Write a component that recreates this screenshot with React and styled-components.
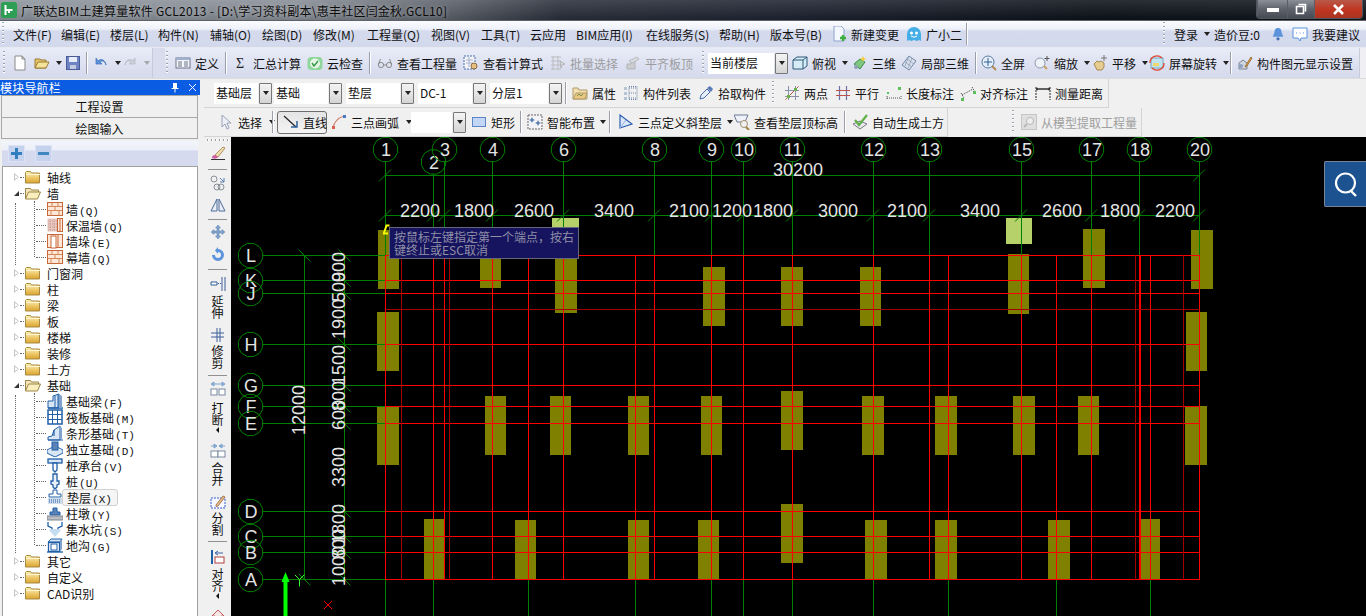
import styled, { createGlobalStyle } from "styled-components";

const GlobalStyle = createGlobalStyle`
  html, body { margin: 0; padding: 0; background: #f0f0f0; overflow: hidden; }
  body { font-family: "Noto Sans CJK SC", "Liberation Sans", sans-serif; font-size: 12px; color: #111; }
`;

const Window = styled.div`
  width: 1366px;
  height: 616px;
  display: flex;
  flex-direction: column;
  overflow: hidden;
  background: #f0f0f0;
`;

/* ---------- title bar ---------- */
const TitleBar = styled.div`
  height: 21px;
  flex: none;
  display: flex;
  align-items: center;
  padding-left: 1px;
  border-bottom: 1px solid #5c6068;
  box-sizing: border-box;
  background:
    linear-gradient(180deg, rgba(255,255,255,.12), rgba(0,0,0,.12)),
    linear-gradient(90deg, #8e959e 0, #878d96 300px, #5b6069 450px, #2a2f3b 560px, #1d2230 800px, #0b1219 1100px, #11161c 1366px);
`;
const TitleText = styled.div`
  margin-left: 4px;
  font-size: 12px;
  letter-spacing: 0.24px;
  white-space: nowrap;
  color: #0c0c0c;
  text-shadow: 0 0 4px rgba(255,255,255,.55);
`;
const WinButtons = styled.div`
  margin-left: auto;
  margin-right: 3px;
  align-self: flex-start;
  display: flex;
  height: 18px;
  border: 1px solid #50545c;
  border-top: none;
  border-radius: 0 0 4px 4px;
  overflow: hidden;
`;
const WinBtn = styled.div`
  width: ${(p) => p.$w}px;
  display: flex;
  align-items: center;
  justify-content: center;
  border-left: 1px solid #5a5e66;
  background: ${(p) => p.$close
    ? "linear-gradient(180deg,#b85a4a,#c03520 55%,#a83422)"
    : "linear-gradient(180deg,#8a8f98,#5d626c 50%,#474b54)"};
`;

/* ---------- menu bar ---------- */
const MenuBar = styled.div`
  height: 27px;
  flex: none;
  display: flex;
  align-items: center;
  background: linear-gradient(180deg, #fbfcff 0, #eef1f9 30%, #d5daed 40%, #d3d9ec 100%);
  border-bottom: 1px solid #e8eaf0;
  box-sizing: border-box;
`;
const MenuItem = styled.div`
  width: ${(p) => p.$w}px;
  flex: none;
  display: flex;
  align-items: center;
  white-space: nowrap;
  gap: 4px;
`;
const Grip = styled.div`
  flex: none;
  width: 2px;
  height: ${(p) => p.$h || 24}px;
  margin: 0 ${(p) => p.$r ?? 3}px 0 ${(p) => p.$l ?? 3}px;
  background: repeating-linear-gradient(180deg, #9aa0b0 0 1px, #fff 1px 2px, transparent 2px 4px);
`;
const HGrip = styled.div`
  width: 22px;
  height: 2px;
  margin-top: 2px;
  flex: none;
  background: repeating-linear-gradient(90deg, #a0a0a0 0 1px, #fff 1px 2px, transparent 2px 4px);
`;

/* ---------- tool bars ---------- */
const MainBar = styled.div`
  height: 31px;
  flex: none;
  display: flex;
  align-items: center;
  background: linear-gradient(180deg, #e9ecf7 0, #dfe3f2 45%, #d4d9ec 100%);
  border-bottom: 1px solid #dcdcdc;
  box-sizing: border-box;
`;
const BarStrip = styled.div`
  width: ${(p) => p.$w}px;
  height: 100%;
  flex: none;
  background: ${(p) => p.$bg || "#e6e8f2"};
  border-left: 1px solid #c8ccd8;
  box-sizing: border-box;
`;
const Tool = styled.div`
  width: ${(p) => p.$w}px;
  flex: none;
  display: flex;
  align-items: center;
  gap: 4px;
  white-space: nowrap;
  color: ${(p) => (p.$off ? "#8c8c8c" : "#111")};
  opacity: ${(p) => (p.$off ? 0.8 : 1)};
`;
const ToolSep = styled.div`
  width: ${(p) => p.$w}px;
  height: 22px;
  flex: none;
  border-left: 1px solid #9a9ea8;
  box-shadow: inset 1px 0 0 #fff;
  box-sizing: border-box;
`;
const Caret = styled.span`
  flex: none;
  width: 0;
  height: 0;
  margin-left: ${(p) => p.$ml ?? 0}px;
  border-left: 3.5px solid transparent;
  border-right: 3.5px solid transparent;
  border-top: 4px solid ${(p) => p.$c || "#222"};
`;
const SelectBox = styled.div`
  width: ${(p) => p.$w}px;
  flex: none;
  display: flex;
  height: 21px;
`;
const SelectValue = styled.div`
  flex: 1;
  background: #fff;
  padding-left: 2px;
  line-height: 20px;
  white-space: nowrap;
  font-size: 12px;
`;
const SelectArrow = styled.div`
  width: 11px;
  margin-left: 1px;
  display: flex;
  align-items: center;
  justify-content: center;
  border: 1px solid #777;
  border-radius: 1px;
  background: linear-gradient(180deg, #f4f4f4, #d4d4d4);
`;
const RightArea = styled.div`
  flex: 1;
  min-width: 0;
  display: flex;
  flex-direction: column;
`;
const SubRow = styled.div`
  height: 29px;
  flex: none;
  display: flex;
  align-items: stretch;
`;
const SubBar = styled.div`
  display: flex;
  align-items: center;
  flex: none;
  margin-left: ${(p) => p.$ml || 0}px;
  padding-left: ${(p) => p.$pl || 0}px;
  background: #f0f0f0;
  border-right: 1px solid #d4d4d4;
  border-bottom: 1px solid #d4d4d4;
  box-sizing: border-box;
`;
const PressedTool = styled(Tool)`
  height: 23px;
  box-sizing: border-box;
  padding-left: 5px;
  margin-right: 4px;
  border: 1px solid #6e6e6e;
  border-radius: 3px;
  background: linear-gradient(180deg, #e4e4e4, #f4f4f4);
`;

/* ---------- left panel ---------- */
const Body = styled.div`
  flex: 1;
  min-height: 0;
  display: flex;
`;
const LeftPanel = styled.div`
  width: 200px;
  flex: none;
  margin-right: 4px;
  padding-top: 1px;
  box-sizing: border-box;
  display: flex;
  flex-direction: column;
`;
const PanelHead = styled.div`
  height: 15px;
  flex: none;
  display: flex;
  align-items: center;
  background: #0a5ce2;
  color: #fff;
  font-size: 12px;
  letter-spacing: 0.2px;
`;
const PanelHeadBtns = styled.div`
  margin-left: auto;
  display: flex;
  align-items: center;
  gap: 8px;
  padding-right: 3px;
`;
const NavButton = styled.div`
  height: 22px;
  flex: none;
  margin: 0 2px 0 1px;
  display: flex;
  align-items: center;
  justify-content: center;
  background: #f0f0f0;
  border: 1px solid #a8a8a8;
  border-bottom-width: ${(p) => (p.$last ? 1 : 0)}px;
  font-size: 12px;
  box-sizing: border-box;
  &:first-of-type { margin-top: 1px; }
`;
const TreeTools = styled.div`
  height: 25px;
  flex: none;
  margin: 2px 2px 0 2px;
  display: flex;
  align-items: center;
  gap: 10px;
  padding-left: 6px;
  background: linear-gradient(180deg, #f2f4fb 0, #eef0f9 35%, #d5daee 40%, #d5daee 100%);
`;
const ExpandBtn = styled.div`
  width: 15px;
  height: 15px;
  display: flex;
  align-items: center;
  justify-content: center;
  background: #c5d2ee;
  border: 1px solid #dbe3f4;
`;
const Tree = styled.div`
  flex: 1;
  margin: 0 2px;
  padding-top: 2px;
  background: #fff;
  border-left: 1px solid #a0a0a0;
  border-right: 1px solid #a0a0a0;
  border-top: 1px solid #a0a0a0;
  overflow: hidden;
`;
const TreeBranch = styled.div`
  position: relative;
  &::before {
    content: "";
    position: absolute;
    left: 12px;
    top: 2px;
    bottom: 0;
    border-left: 1px dotted #666;
  }
  &::after {
    content: "";
    position: absolute;
    left: 31px;
    top: 0;
    bottom: 8px;
    border-left: 1px dotted #666;
  }
`;
const TreeRow = styled.div`
  height: 16px;
  display: flex;
  align-items: center;
  position: relative;
  z-index: 1;
  padding-left: ${(p) => (p.$child ? 32 : 11)}px;
  white-space: nowrap;
`;
const Expander = styled.span`
  width: 0;
  height: 0;
  flex: none;
  border-top: 4.5px solid transparent;
  border-bottom: 4.5px solid transparent;
  border-left: 5px solid #c4c4c4;
  position: relative;
  &::after {
    content: "";
    position: absolute;
    left: -4px;
    top: -2.5px;
    border-top: 2.5px solid transparent;
    border-bottom: 2.5px solid transparent;
    border-left: 3px solid #fff;
  }
`;
const ExpanderOpen = styled.span`
  width: 0;
  height: 0;
  flex: none;
  border-bottom: 5px solid #333;
  border-left: 5px solid transparent;
`;
const Dots = styled.span`
  flex: none;
  width: ${(p) => p.$w}px;
  margin: 0 1px;
  border-top: 1px dotted #666;
`;
const TreeLabel = styled.span`
  margin-left: ${(p) => p.$ml ?? 6}px;
  font-size: 12px;
  letter-spacing: 0;
  ${(p) => p.$sel && `
    margin-left: -1px;
    padding: 0 5px 0 4px;
    height: 15px;
    line-height: 15px;
    border: 1px solid #cfcfcf;
    border-radius: 3px;
    background: #f5f5f5;
  `}
`;
const KeyHint = styled.span`
  font-family: "Liberation Mono", monospace;
  font-size: 11px;
  margin-left: 1px;
`;

/* ---------- vertical tool column ---------- */
const WorkArea = styled.div`
  flex: 1;
  min-height: 0;
  display: flex;
`;
const VBar = styled.div`
  width: 27px;
  flex: none;
  display: flex;
  flex-direction: column;
  align-items: center;
  overflow: hidden;
  background: #f0f0f0;
`;
const VItem = styled.div`
  flex: none;
  display: flex;
  flex-direction: column;
  align-items: center;
  margin-top: ${(p) => p.$mt || 0}px;
`;
const VSep = styled.div`
  flex: none;
  width: 19px;
  height: 1px;
  background: #909090;
  margin-top: ${(p) => p.$mt}px;
`;
const VLabel = styled.div`
  width: 12px;
  margin-top: ${(p) => p.$mt || 2}px;
  font-size: 12px;
  line-height: 12px;
  color: #111;
  word-break: break-all;
`;
const VCaret = styled.span`
  margin-top: 1px;
  width: 0;
  height: 0;
  border-top: 3px solid transparent;
  border-bottom: 3px solid transparent;
  border-right: 3px solid #111;
`;

/* ---------- drawing surface ---------- */
const CanvasWrap = styled.div`
  flex: 1;
  position: relative;
  background: #000;
  overflow: hidden;
`;
const Hint = styled.div`
  position: absolute;
  left: ${389 - 231}px;
  top: ${227 - 137}px;
  width: 190px;
  height: 32px;
  box-sizing: border-box;
  padding: 2px 0 0 4px;
  background: #16145e;
  border: 1px solid #66667c;
  color: #8f8fa6;
  font-size: 12px;
  line-height: 13px;
`;
const SearchBtn = styled.div`
  position: absolute;
  right: 0;
  top: ${161 - 137}px;
  width: 42px;
  height: 46px;
  box-sizing: border-box;
  display: flex;
  align-items: center;
  justify-content: center;
  background: #1c528f;
  border: 1px solid #7a8494;
  border-right: none;
  border-radius: 2px 0 0 2px;
`;

/* ---------- icons ---------- */
const folderFill = (
  <linearGradient id="fold" x1="0" y1="0" x2="0" y2="1">
    <stop offset="0" stopColor="#fff3b8" />
    <stop offset="1" stopColor="#dca32c" />
  </linearGradient>
);
const B = "#1f5fa8";

const icons = {
  file: <path d="M3 1h7l3 3v11H3z M10 1v3h3" fill="#fff" stroke="#8a8a8a" />,
  open: <><path d="M1 13V4h5l1 1h5v8z" fill="#e8c468" stroke="#9a7a30" /><path d="M1 13l3-6h11l-3 6z" fill="#f6e39a" stroke="#9a7a30" /></>,
  save: <><rect x="1.5" y="1.5" width="13" height="13" fill="#6d83c4" stroke="#4a5c98" /><rect x="4" y="2" width="8" height="5" fill="#e8ecf8" /><rect x="5" y="10" width="6" height="4" fill="#c3cbe4" /></>,
  undo: <path d="M3 3v6h6L7 7c2-2 5-1 6 3-.5-5-5-7-8-4z" fill="#5b93dd" stroke="#3d70b8" strokeWidth=".7" />,
  redo: <path d="M13 3v6H7l2-2c-2-2-5-1-6 3 .5-5 5-7 8-4z" fill="#c8ccd4" stroke="#a8acb6" strokeWidth=".7" />,
  define: <><rect x="1" y="3" width="14" height="10" fill="#f4f6fb" stroke="#6a7488" /><rect x="1" y="3" width="14" height="2" fill="#9db0d0" /><path d="M3 7h4M3 9h4M3 11h4M9 7h4M9 9h4M9 11h4" stroke="#6a7488" /></>,
  sigma: <text x="3" y="13" fontSize="14" fontFamily="Liberation Serif" fill="#222">Σ</text>,
  cloud: <><rect x="0.5" y="2" width="15" height="13" rx="4" fill="#8fd69a" /><circle cx="8" cy="8.5" r="5" fill="#e6f6e6" /><path d="M5 8l2 3 4-5" fill="none" stroke="#3a9a4a" strokeWidth="1.5" /></>,
  glasses: <><circle cx="4" cy="10" r="2.6" fill="none" stroke="#8a8a8a" /><circle cx="12" cy="10" r="2.6" fill="none" stroke="#8a8a8a" /><path d="M6.5 10h3M1.5 9l2-5M14.5 9l-2-5" stroke="#8a8a8a" /></>,
  calc: <><rect x="1" y="1" width="11" height="13" fill="#f2f4fa" stroke="#4a6aa8" strokeDasharray="2 1" /><path d="M3 5h7M3 8h7M6 2v10" stroke="#a8b2c8" /><circle cx="11" cy="11" r="3" fill="#e8c080" stroke="#8a6a40" /></>,
  batch: <><path d="M1 2h10M1 6h10M1 10h10M1 14h10M3 1v14M8 1v14" stroke="#b4b4b4" /><path d="M10 6l5 3-3 1-1 3z" fill="#d8d8d8" stroke="#aaa" /></>,
  level: <><path d="M2 14V9h4V6h4v8z" fill="#c8c8c8" stroke="#aaa" /><path d="M4 6l8-4 2 2-7 4z" fill="#dcdcdc" stroke="#b0b0b0" /></>,
  cube: <><path d="M1 5l4-3h10v9l-4 3H1z" fill="#d6ecf6" stroke="#2f5a78" /><path d="M1 5h10v9M11 5l4-3" fill="none" stroke="#2f5a78" /></>,
  three: <><path d="M2 9l6-5 5 3-5 7z" fill="#7fc67f" stroke="#3a8a4a" /><path d="M11 1l1 2 2 1-2 1-1 2-1-2-2-1 2-1z" fill="#f0d040" /><circle cx="4" cy="12" r="2" fill="#8fa0b8" /></>,
  part3d: <><path d="M8 1l7 5-7 9-7-5z" fill="#d8e0ec" stroke="#7088a8" /><path d="M4 7l7 5M6 4l7 5M8 1L4 11M11 3L7 13" stroke="#8a9ab4" strokeWidth=".7" /></>,
  full: <><circle cx="7" cy="7" r="6" fill="#e4eef8" stroke="#5a7aa0" /><path d="M7 3v8M3 7h8" stroke="#2f5f98" /><path d="M11 11l4 4" stroke="#b08a50" strokeWidth="2" /></>,
  zoom: <><circle cx="6" cy="8" r="5" fill="#eef3fa" stroke="#8a9ab0" /><path d="M10 11l3 3" stroke="#c8a060" strokeWidth="2" /><path d="M13 1v5M10.5 3.500h5" stroke="#555" /></>,
  pan: <><path d="M2 9l3-3 2 1 2-1 3 2v4l-2 3H5z" fill="#e6cc90" stroke="#a88a50" /><path d="M12 0v6M9 3h6" stroke="#777" /></>,
  rotate: <><rect x="2" y="3" width="12" height="10" fill="#bfe4f0" stroke="#7aa8c0" /><rect x="4" y="8" width="6" height="3" fill="#f0d870" /><path d="M1 8a7 7 0 0 1 12-5M15 8a7 7 0 0 1-12 5" fill="none" stroke="#e04830" strokeWidth="1.3" /></>,
  setting: <><path d="M2 14V8l4-3 4 3v6z" fill="#cfd6e2" stroke="#7a8494" /><path d="M9 10l5-8 1 1-5 8-2 1z" fill="#e8b060" stroke="#a07030" /><circle cx="4" cy="11" r="2" fill="#8aa0c0" /></>,
  prop: <><path d="M1 3h5l1 2h8v9H1z" fill="#f2e0b0" stroke="#b09a68" /><path d="M1 14l3-6h11l-2 6z" fill="#e8c880" stroke="#b09a68" /><path d="M5 11l2-2 2 2 2-2" stroke="#7a8a50" fill="none" /></>,
  list: <><rect x="1" y="2" width="3" height="3" fill="#b6c4d8" /><rect x="1" y="7" width="3" height="3" fill="#b6c4d8" /><rect x="1" y="12" width="3" height="3" fill="#b6c4d8" /><path d="M6 3h8M6 8h8M6 13h8M6 1.500h8v13H6z" fill="none" stroke="#6d84a6" strokeDasharray="1 1" /></>,
  picker: <><path d="M2 14l1-4 6-6 3 3-6 6z" fill="#e6eef8" stroke="#4a6aa8" /><path d="M9 3l3-2 3 3-2 3z" fill="#5a7ab8" /></>,
  twoPt: <><path d="M4.500 1v14M11.500 1v14M1 5.500h14M1 11.500h14" stroke="#8a90a8" /><path d="M1.500 14.500L14.500 1.500" stroke="#c0503a" /><rect x="3" y="10" width="3" height="3" fill="#6ab04a" /><rect x="10" y="3" width="3" height="3" fill="#6ab04a" /></>,
  parallel: <><path d="M4.500 1v14M11.500 1v14" stroke="#6a70a8" strokeWidth="1.200" /><path d="M1 5.500h14M1 10.500h14" stroke="#c0504a" strokeWidth="1.200" /></>,
  lenDim: <><path d="M1 13h14M1 11v4M15 11v4" stroke="#555" strokeDasharray="1 1" /><rect x="12" y="2" width="3" height="3" fill="#5ac05a" /><rect x="1" y="7" width="2" height="2" fill="#5ac05a" /></>,
  alignDim: <><path d="M2 10l11-6M1 8l3 5M12 2l3 5" stroke="#555" strokeDasharray="1.500 1" fill="none" /><rect x="1" y="13" width="3" height="3" fill="#5ac05a" /><rect x="13" y="6" width="3" height="3" fill="#5ac05a" /></>,
  measure: <><path d="M1 2v13M15 2v13" stroke="#222" strokeDasharray="2 1" /><path d="M1 4h14" stroke="#333" strokeWidth="1.500" /><path d="M3 3l-2 1 2 1M13 3l2 1-2 1" stroke="#333" fill="none" /></>,
  arrow: <path d="M4 1v12l3-3 2 5 2-1-2-5h4z" fill="#eceff8" stroke="#9aa2b8" />,
  line: <><path d="M1 2l12 11" stroke="#222" strokeWidth="1.200" /><path d="M8 13h6V7" stroke="#2a5f9e" strokeWidth="1.500" fill="none" /></>,
  arc: <><path d="M2 14C3 8 7 4 13 2" stroke="#d08878" strokeWidth="1.300" fill="none" /><rect x="1" y="12" width="3" height="3" fill="#d8604a" /><rect x="12" y="1" width="3" height="3" fill="#4a78c8" /></>,
  rect: <rect x="1.500" y="3.500" width="13" height="9" fill="#c4d6f6" stroke="#5d86c8" />,
  smart: <><rect x="1" y="1" width="14" height="14" fill="#f4f4f8" stroke="#666" strokeDasharray="2 1" /><path d="M5 3l1 2 2 1-2 1-1 2-1-2-2-1 2-1zM11 6l1 2 2 1-2 1-1 2-1-2-2-1 2-1z" fill="#5c7fb0" /></>,
  tri: <><path d="M2 1v13l12-4z" fill="#dce8f8" stroke="#2f5fb0" strokeWidth="1.200" /><path d="M2 14L8 6" stroke="#8fb0e0" /></>,
  lookTop: <><path d="M0 1h14l-3 7H3z" fill="#eef2f8" stroke="#6a7a94" /><circle cx="10" cy="10" r="3.500" fill="#f0f0f0" stroke="#a09070" /><path d="M12 13l3 3" stroke="#a08040" strokeWidth="2" /></>,
  autoEarth: <><path d="M1 10l7 5 7-5-7-3z" fill="#e8e8ec" stroke="#7a7a88" /><path d="M3 6l4 5 8-10" fill="none" stroke="#5fb04a" strokeWidth="2.200" /></>,
  model: <><rect x="0.500" y="0.500" width="15" height="15" fill="#dcdcdc" stroke="#bcbcbc" /><circle cx="9" cy="7" r="3.500" fill="#eee" stroke="#aaa" /><path d="M6 10l-3 3" stroke="#aaa" strokeWidth="2" /></>,
  newChange: <><path d="M3 0h7l3 3v12H3z" fill="#f4f8fe" stroke="#8aa4cc" /><path d="M12 9v6M9 12h6" stroke="#3fae3f" strokeWidth="2.400" /></>,
  smile: <><path d="M1 8a7 7 0 0 1 14 0v7l-2-1-2 1-3-1-3 1-2-1-2 1z" fill="#45aee6" /><circle cx="5.500" cy="7" r="1.500" fill="#fff" /><circle cx="10.500" cy="7" r="1.500" fill="#fff" /><path d="M5 10q3 2.500 6 0" stroke="#fff" fill="none" /></>,
  bell: <><path d="M8 1c3 0 4 2 4 5l2 5H2l2-5c0-3 1-5 4-5z" fill="#5b93dd" /><circle cx="8" cy="13.500" r="1.800" fill="#3d70b8" /></>,
  chat: <><path d="M1 2h14v10H9l-1 3-2-3H1z" fill="#fff" stroke="#5b93dd" /><path d="M4 7h1M7.500 7h1M11 7h1" stroke="#5b93dd" /></>,
  brush: <><path d="M1 14.500h14" stroke="#333" /><path d="M5 10l8-8 2 1-7 9z" fill="#f0e0b0" stroke="#b09060" /><path d="M2 13c0-2 1-3 3-3l3 2c-1 2-4 2-6 1z" fill="#d060a0" /></>,
  rings: <><circle cx="4" cy="4" r="3" fill="none" stroke="#8a9098" /><circle cx="11" cy="12" r="3" fill="none" stroke="#8a9098" /><circle cx="7" cy="12" r="3" fill="none" stroke="#8a9098" /><path d="M10 3l4 4M14 3v4h-4" stroke="#5b7fb0" fill="none" /></>,
  mirror: <><path d="M1 14L7 2v12zM15 14L9 2v12z" fill="#e8edf6" stroke="#4a6a9a" /></>,
  move: <path d="M8 1l2.500 3H9v3h3V5.500L15 8l-3 2.500V9H9v3h1.500L8 15l-2.500-3H7V9H4v1.500L1 8l3-2.500V7h3V4H5.500z" fill="#7fa3cc" stroke="#5a7fa8" strokeWidth=".5" />,
  rot: <path d="M8 2a6 6 0 1 1-6 6h3a3 3 0 1 0 3-3v2L5 3.500 8 0z" fill="#5b93dd" />,
  extend: <><path d="M15 1v14M12 1v14" stroke="#3a5f98" /><path d="M1 6h6v3H1z" fill="#fff" stroke="#2f5f98" /><path d="M8 7.500h3" stroke="#2f5f98" strokeDasharray="1 1" /></>,
  trim: <><path d="M1 6h13M1 10h13" stroke="#3a5f98" /><path d="M7 1v14M10 1v14" stroke="#3a5f98" /></>,
  brk: <><path d="M1 4l3-2v4zM8 4H4M15 4l-3-2v4zM8 4h4" fill="#8fb0dc" stroke="#7fa3cc" /><rect x="1" y="9" width="6" height="6" fill="#fff" stroke="#7a8aa0" /><rect x="9" y="9" width="6" height="6" fill="#fff" stroke="#7a8aa0" /></>,
  merge: <><path d="M7 4L4 2v4zM7 4H1M9 4l3-2v4zM9 4h6" fill="#8fb0dc" stroke="#7fa3cc" /><rect x="1" y="9" width="7" height="6" fill="#fff" stroke="#7a8aa0" /><rect x="8" y="9" width="7" height="6" fill="#fff" stroke="#7a8aa0" /></>,
  split: <><rect x="1" y="4" width="14" height="10" fill="#f6f8ff" stroke="#3a5fd0" strokeDasharray="2 1" /><path d="M6 11l7-9 2 1-7 9-2 .5z" fill="#e8c090" stroke="#a87a50" /></>,
  align: <><path d="M2 1v14" stroke="#1f5fa8" strokeWidth="2" /><rect x="5" y="8" width="9" height="6" fill="#fff" stroke="#b04040" /><path d="M13 4H6M8 2L5 4l3 2" stroke="#3a5fa8" fill="none" /></>,
  last: <><path d="M8 1l6 6h-3v4H5V7H2z" fill="#f6e6e6" stroke="#c05a5a" /><path d="M2 14h12" stroke="#999" strokeWidth="2" /></>,
  wall: <><rect x="0.500" y="1.500" width="15" height="13" fill="#fbe8d8" stroke="#c8683a" /><path d="M1 5.500h14M1 9.500h14M5 2v3.500M11 2v3.500M8 5.500v4M4 9.500v5M12 9.500v5" stroke="#d8885a" /></>,
  insul: <><rect x="0.500" y="1.500" width="10" height="13" fill="#e8c8c0" /><rect x="10.500" y="1.500" width="5" height="13" fill="#fbe8d8" stroke="#c8683a" /><path d="M1 4h9M1 7h9M1 10h9M1 13h9M3 2v12M7 2v12" stroke="#c89a90" strokeDasharray="1 1" /><path d="M13 2v12" stroke="#c8683a" /></>,
  pier: <><rect x="0.500" y="1.500" width="15" height="13" fill="#fbe8d8" stroke="#c8683a" /><rect x="4" y="3" width="5" height="12" fill="#fff" stroke="#c8683a" /><path d="M11 2v12" stroke="#c8683a" /></>,
  fBeam: <><path d="M1 15V8h5V3l6-2v14z" fill="#d8e6f6" stroke={B} /><path d="M8 3v12M11 2v13" stroke={B} /><path d="M1 15h15" stroke={B} strokeWidth="1.500" /><path d="M12 1l3 2v12h-3z" fill="#7fa3cc" /></>,
  fRaft: <><rect x="1" y="1" width="14" height="14" fill="#fff" stroke={B} strokeWidth="1.500" /><path d="M5.500 1v14M10.500 1v14M1 5.500h14M1 10.500h14" stroke={B} /></>,
  fStrip: <><path d="M1 15v-3l4-1 2-6 6-4v14z" fill="#d8e6f6" stroke={B} /><path d="M1 15h15M7 5v6" stroke={B} strokeWidth="1.200" /><path d="M12 1l3 2v11h-3z" fill="#7fa3cc" /></>,
  fIso: <><path d="M0 9l8-4 8 4-8 4z" fill="#fff" stroke={B} /><path d="M0 9v3l8 4 8-4V9" fill="#d8e6f6" stroke={B} /><rect x="5" y="1" width="6" height="8" fill="#5b83b8" stroke={B} /></>,
  fCap: <><rect x="1" y="2" width="14" height="4" fill="#d8e6f6" stroke={B} strokeWidth="1.300" /><path d="M6 6h4v7l-2 2-2-2z" fill="#fff" stroke={B} strokeWidth="1.300" /></>,
  fPile: <><path d="M6 1h4v7h2v3l-2 1v2l-2 2-2-2v-2l-2-1V8h2z" fill="#eaf0f8" stroke={B} strokeWidth="1.300" /></>,
  fPad: <><path d="M6 1h4v4h4v3H2V5h4z" fill="#fff" stroke={B} /><rect x="1" y="9" width="14" height="6" fill="#cfdcec" /><path d="M2 11h12M2 13h12" stroke={B} strokeDasharray="1 1" /></>,
  fColPad: <><path d="M6 3h4v4h3v3H3V7h3z" fill="#5b83b8" stroke={B} /><rect x="0" y="11" width="16" height="4" fill="#b8bcc4" stroke="#808690" /></>,
  fSump: <><path d="M1 1v4l4 2v3h6V7l4-2V1" fill="none" stroke={B} strokeWidth="1.300" /><path d="M2 9l6 7 6-7-3-1H5z" fill="#c4dcf0" /></>,
  fTrench: <><path d="M1 5l3-3h11l-2 3z" fill="#d8e6f6" stroke={B} /><rect x="1.500" y="5.500" width="11" height="9" fill="#fff" stroke={B} strokeWidth="1.300" /><rect x="4" y="7" width="6" height="6" fill="#fff" stroke={B} /><path d="M0 15h16" stroke={B} strokeWidth="1.300" /><path d="M13 5l2-3v10l-2 3z" fill="#7fa3cc" /></>,
  folder: <><path d="M0.500 14V3.500l1-1h4l1 1.500h8v10z" fill="url(#fold)" stroke="#a88a44" /><path d="M1 5.500h14" stroke="#fff6d0" /></>,
  folderOpen: <><path d="M0.500 14V3.500h5l1 1.500h7v2" fill="#f4e6b4" stroke="#9a8448" /><path d="M0.500 14l3-7h12l-3 7z" fill="#fbeebd" stroke="#9a8448" /></>,
};

const Icon = ({ name, size = 16 }) => (
  <svg width={size} height={size} viewBox="0 0 16 16" style={{ flex: "none", display: "block" }}>
    {icons[name]}
  </svg>
);

const Item = ({ w, icon, label, caret, off, caretGap = 2 }) => (
  <Tool $w={w} $off={off}>
    {icon && <Icon name={icon} />}
    {label && <span>{label}</span>}
    {caret && <Caret $ml={caretGap} $c={off ? "#999" : "#222"} />}
  </Tool>
);

const Select = ({ w, value }) => (
  <SelectBox $w={w}>
    <SelectValue>{value}</SelectValue>
    <SelectArrow><Caret /></SelectArrow>
  </SelectBox>
);

const menuItems = [
  ["文件(F)", 48], ["编辑(E)", 49], ["楼层(L)", 48], ["构件(N)", 52], ["辅轴(O)", 52], ["绘图(D)", 51],
  ["修改(M)", 54], ["工程量(Q)", 64], ["视图(V)", 50], ["工具(T)", 49], ["云应用", 46], ["BIM应用(I)", 70],
  ["在线服务(S)", 73], ["帮助(H)", 51], ["版本号(B)", 61],
];

const wallKids = [
  ["墙", "Q", "wall"], ["保温墙", "Q", "insul"], ["墙垛", "E", "pier"], ["幕墙", "Q", "wall"],
];
const baseKids = [
  ["基础梁", "F", "fBeam"], ["筏板基础", "M", "fRaft"], ["条形基础", "T", "fStrip"], ["独立基础", "D", "fIso"],
  ["桩承台", "V", "fCap"], ["桩", "U", "fPile"], ["垫层", "X", "fPad", true], ["柱墩", "Y", "fColPad"],
  ["集水坑", "S", "fSump"], ["地沟", "G", "fTrench"],
];

const FolderRow = ({ label, open }) => (
  <TreeRow>
    {open ? <ExpanderOpen /> : <Expander />}
    <Dots $w={4} />
    <Icon name={open ? "folderOpen" : "folder"} />
    <TreeLabel>{label}</TreeLabel>
  </TreeRow>
);

const ChildRows = ({ kids }) => (
  <TreeBranch>
    {kids.map(([label, key, icon, sel]) => (
      <TreeRow $child key={label}>
        <Dots $w={10} />
        <Icon name={icon} />
        <TreeLabel $ml={3} $sel={sel}>
          {label}<KeyHint>({key})</KeyHint>
        </TreeLabel>
      </TreeRow>
    ))}
  </TreeBranch>
);

/* ---------- CAD drawing data, in page coordinates ---------- */
const axesX = [
  ["1", 385, 149.5], ["2", 433, 162], ["3", 444, 149.5], ["4", 492, 149.5], ["6", 563, 149.5], ["8", 654, 149.5],
  ["9", 711, 149.5], ["10", 743, 149.5], ["11", 792, 149.5], ["12", 873, 149.5], ["13", 929, 149.5],
  ["15", 1021, 149.5], ["17", 1091, 149.5], ["18", 1139, 149.5], ["20", 1199, 149.5],
];
const axesY = [
  ["L", 255], ["K", 280], ["J", 293], ["H", 344], ["G", 385], ["F", 406],
  ["E", 423], ["D", 511], ["C", 536], ["B", 552], ["A", 579],
];
const redV = [385, 433, 444, 492, 528, 563, 635, 654, 711, 743, 792, 873, 929, 948, 1021, 1056, 1091, 1139, 1140, 1150, 1199];
const darkV = [401, 449, 1135, 1183];
const stubs = [385, 433, 528, 635, 711, 743, 792, 873, 948, 1056, 1150];
const pads = [
  [378, 230, 21, 59], [480, 229, 21, 59], [555, 254, 22, 59], [703, 267, 22, 59], [781, 267, 22, 59], [860, 267, 21, 59],
  [1008, 254, 21, 60], [1083, 229, 22, 59], [1191, 230, 22, 59], [377, 312, 22, 59], [1186, 312, 21, 59],
  [377, 407, 22, 58], [485, 396, 21, 59], [550, 396, 21, 59], [628, 396, 21, 59], [701, 396, 21, 59], [781, 391, 22, 59],
  [862, 396, 22, 59], [935, 396, 22, 59], [1013, 396, 22, 59], [1078, 396, 21, 59], [1185, 406, 22, 59],
  [424, 519, 21, 60], [515, 520, 21, 59], [628, 520, 21, 59], [698, 520, 21, 59], [781, 504, 22, 59], [865, 520, 22, 59],
  [935, 520, 22, 59], [1048, 520, 22, 59], [1140, 519, 20, 60],
];
const lightPads = [[552, 218, 27, 28], [1006, 218, 26, 26]];
const dimTop = [
  ["2200", 420], ["1800", 474], ["2600", 534], ["3400", 614], ["2100", 689], ["1200", 732], ["1800", 773],
  ["3000", 838], ["2100", 907], ["3400", 980], ["2600", 1062], ["1800", 1120], ["2200", 1175],
];
const dimLeft = [
  ["900", 267], ["500", 287], ["1900", 319], ["1500", 365], ["800", 396], ["600", 415],
  ["3300", 467], ["1800", 524], ["800", 544], ["1000", 566],
];
const tickTop = [385, 433, 444, 492, 563, 654, 711, 743, 792, 873, 929, 1021, 1091, 1139, 1199];
const tickLeft = [255, 280, 293, 344, 385, 406, 423, 511, 536, 552, 579];

const GREEN = "#008000";
const TXT = "#e4e4e4";

const ring = (cx, cy, r) =>
  Array.from({ length: 12 }, (_, i) => {
    const a = (Math.PI / 6) * i + Math.PI / 12;
    return `${(cx + r * Math.cos(a)).toFixed(1)},${(cy + r * Math.sin(a)).toFixed(1)}`;
  }).join(" ");

const CadDrawing = () => (
  <svg width="1135" height="479" viewBox="231 137 1135 479" style={{ display: "block" }}
    fontFamily="'Liberation Sans', sans-serif" fontSize="18">
    {pads.map(([x, y, w, h]) => <rect key={`${x}-${y}`} x={x} y={y} width={w} height={h} fill="#808000" />)}
    {lightPads.map(([x, y, w, h]) => <rect key={x} x={x} y={y} width={w} height={h} fill="#b6d16a" />)}

    <g stroke={GREEN} shapeRendering="crispEdges">
      {axesX.map(([n, x, cy]) => <line key={n} x1={x + .5} y1={cy + 12} x2={x + .5} y2={255} />)}
      {stubs.map((x) => <line key={x} x1={x + .5} y1={579} x2={x + .5} y2={616} />)}
      {axesY.map(([n, y]) => <line key={n} x1={263} y1={y + .5} x2={385} y2={y + .5} />)}
      <line x1={385} y1={175.5} x2={1200} y2={175.5} />
      <line x1={385} y1={215.5} x2={1200} y2={215.5} />
      <line x1={304.5} y1={255} x2={304.5} y2={580} />
      <line x1={344.5} y1={255} x2={344.5} y2={580} />
    </g>
    <g stroke={GREEN}>
      {tickTop.map((x) => <line key={x} x1={x - 6} y1={221.5} x2={x + 6} y2={209.5} />)}
      <line x1={379} y1={181.5} x2={391} y2={169.500} />
      <line x1={1193} y1={181.5} x2={1205} y2={169.500} />
      {tickLeft.map((y) => <line key={y} x1={338.5} y1={y - 5.5} x2={350.5} y2={y + 6.5} />)}
      <line x1={298.5} y1={249.5} x2={310.5} y2={261.5} />
      <line x1={298.5} y1={573.5} x2={310.5} y2={585.5} />
    </g>

    <g stroke="#f00" shapeRendering="crispEdges">
      {redV.map((x) => <line key={x} x1={x + .5} y1={255} x2={x + .5} y2={580} />)}
      {axesY.map(([n, y]) => <line key={n} x1={385} y1={y + .5} x2={1200} y2={y + .5} />)}
    </g>
    <g stroke="#a00000" shapeRendering="crispEdges">
      {darkV.map((x) => <line key={x} x1={x + .5} y1={255} x2={x + .5} y2={580} />)}
      <line x1={385} y1={309.5} x2={1200} y2={309.5} />
    </g>

    {axesX.map(([n, x, cy]) => (
      <g key={n}>
        <polygon points={ring(x + .5, cy, 12.5)} fill="none" stroke={GREEN} />
        <text x={x + 1} y={cy + 6.5} textAnchor="middle" fill={TXT}>{n}</text>
      </g>
    ))}
    {axesY.map(([n, y]) => (
      <g key={n}>
        <polygon points={ring(250.5, y + .5, 12.5)} fill="none" stroke={GREEN} />
        <text x={251} y={y + 7} textAnchor="middle" fill={TXT}>{n}</text>
      </g>
    ))}

    <text x={798} y={176} textAnchor="middle" fill={TXT}>30200</text>
    {dimTop.map(([t, x]) => <text key={x} x={x} y={217} textAnchor="middle" fill={TXT}>{t}</text>)}
    {dimLeft.map(([t, y]) => (
      <text key={y} x={345} y={y} textAnchor="middle" fill={TXT} transform={`rotate(-90 345 ${y})`}>{t}</text>
    ))}
    <text x={305} y={410} textAnchor="middle" fill={TXT} transform="rotate(-90 305 410)">12000</text>

    <path d="M285.5 572l4 10h-2v34h-4v-34h-2z" fill="#0f0" />
    <path d="M295 575l4.500 4.500 5-5M299.500 579.500v7" stroke="#3f3" fill="none" />
    <path d="M324 601l8 8M332 601l-8 8" stroke="#f00" />
    <path d="M383 233.500h5M384 233l2.500-7.500h3" fill="none" stroke="#ff0" strokeWidth="2" />
  </svg>
);

export default function App() {
  return (
    <Window>
      <GlobalStyle />
      <svg width="0" height="0" style={{ position: "absolute" }}><defs>{folderFill}</defs></svg>

      <TitleBar>
        <svg width="16" height="16" viewBox="0 0 16 16" style={{ flex: "none" }}>
          <rect width="16" height="16" rx="2.500" fill="#2f9e55" />
          <path d="M4.500 3v10M4.500 8h7M8 8v3" stroke="#fff" strokeWidth="2" fill="none" />
        </svg>
        <TitleText>广联达BIM土建算量软件 GCL2013 - [D:\学习资料副本\惠丰社区闫金秋.GCL10]</TitleText>
        <WinButtons>
          <WinBtn $w={29}><svg width="12" height="5"><rect width="12" height="4" y="1" fill="#fff" /></svg></WinBtn>
          <WinBtn $w={26}>
            <svg width="12" height="12" viewBox="0 0 12 12"><path d="M3.500 1.500h7v7M1.500 3.500h7v7h-7z" fill="none" stroke="#fff" strokeWidth="1.600" /></svg>
          </WinBtn>
          <WinBtn $w={47} $close>
            <svg width="13" height="11" viewBox="0 0 13 11"><path d="M2 1l9 9M11 1l-9 9" stroke="#fff" strokeWidth="2.600" /></svg>
          </WinBtn>
        </WinButtons>
      </TitleBar>

      <MenuBar>
        <Grip $l={2} $r={9} />
        {menuItems.map(([label, w]) => <MenuItem key={label} $w={w}>{label}</MenuItem>)}
        <MenuItem $w={75}><Icon name="newChange" /><span>新建变更</span></MenuItem>
        <MenuItem $w={60}><Icon name="smile" /><span>广小二</span></MenuItem>
        <ToolSep $w={197} />
        <Grip $l={0} $r={9} />
        <MenuItem $w={40}><span>登录</span><Caret $ml={2} /></MenuItem>
        <MenuItem $w={57}>造价豆:0</MenuItem>
        <MenuItem $w={21}><Icon name="bell" size={14} /></MenuItem>
        <MenuItem $w={70}><Icon name="chat" /><span>我要建议</span></MenuItem>
      </MenuBar>

      <MainBar>
        <Grip $l={3} $r={7} />
        <Item w={22} icon="file" />
        <Item w={31} icon="open" caret />
        <Item w={21} icon="save" />
        <ToolSep $w={7} />
        <Item w={29} icon="undo" caret />
        <Item w={30} icon="redo" caret off />
        <BarStrip $w={13} $bg="#d8dcec" />
        <Grip $l={1} $r={7} />
        <Item w={50} icon="define" label="定义" />
        <ToolSep $w={8} />
        <Item w={74} icon="sigma" label="汇总计算" />
        <Item w={62} icon="cloud" label="云检查" />
        <ToolSep $w={8} />
        <Item w={86} icon="glasses" label="查看工程量" />
        <Item w={87} icon="calc" label="查看计算式" />
        <Item w={75} icon="batch" label="批量选择" off />
        <Item w={73} icon="level" label="平齐板顶" off />
        <Grip $l={4} $r={4} />
        <Select w={80} value="当前楼层" />
        <Tool $w={4} />
        <Item w={60} icon="cube" label="俯视" caret />
        <Item w={49} icon="three" label="三维" />
        <Item w={74} icon="part3d" label="局部三维" />
        <ToolSep $w={6} />
        <Item w={53} icon="full" label="全屏" />
        <Item w={58} icon="zoom" label="缩放" caret />
        <Item w={57} icon="pan" label="平移" caret />
        <Item w={81} icon="rotate" label="屏幕旋转" caret />
        <ToolSep $w={7} />
        <Item w={122} icon="setting" label="构件图元显示设置" />
        <BarStrip $w={7} $bg="#f0f0f4" />
      </MainBar>

      <Body>
        <LeftPanel>
          <PanelHead>
            模块导航栏
            <PanelHeadBtns>
              <svg width="10" height="11" viewBox="0 0 10 11"><path d="M3 1h4v5h1.500v1h-3v3.500h-1V7h-3V6H3z" fill="#fff" /></svg>
              <svg width="9" height="9" viewBox="0 0 9 9"><path d="M1 1l7 7M8 1l-7 7" stroke="#fff" /></svg>
            </PanelHeadBtns>
          </PanelHead>
          <NavButton>工程设置</NavButton>
          <NavButton $last>绘图输入</NavButton>
          <TreeTools>
            <ExpandBtn><svg width="11" height="11"><path d="M4 0h3v4h4v3H7v4H4V7H0V4h4z" fill="#2f7fc0" /></svg></ExpandBtn>
            <ExpandBtn><svg width="11" height="3"><rect width="11" height="3" fill="#3f87c0" /></svg></ExpandBtn>
          </TreeTools>
          <Tree>
            <FolderRow label="轴线" />
            <FolderRow label="墙" open />
            <ChildRows kids={wallKids} />
            {["门窗洞", "柱", "梁", "板", "楼梯", "装修", "土方"].map((l) => <FolderRow key={l} label={l} />)}
            <FolderRow label="基础" open />
            <ChildRows kids={baseKids} />
            {["其它", "自定义", "CAD识别"].map((l) => <FolderRow key={l} label={l} />)}
          </Tree>
        </LeftPanel>

        <RightArea>
          <SubRow>
            <SubBar $pl={10}>
              <Select w={58} value="基础层" />
              <Tool $w={2} />
              <Select w={68} value="基础" />
              <Tool $w={4} />
              <Select w={68} value="垫层" />
              <Tool $w={4} />
              <Select w={68} value="DC-1" />
              <Tool $w={4} />
              <Select w={72} value="分层1" />
              <Tool $w={3} />
              <ToolSep $w={7} />
              <Item w={51} icon="prop" label="属性" />
              <Item w={75} icon="list" label="构件列表" />
              <Item w={73} icon="picker" label="拾取构件" />
              <Grip $l={1} $r={10} />
              <Item w={51} icon="twoPt" label="两点" />
              <Item w={51} icon="parallel" label="平行" />
              <Item w={74} icon="lenDim" label="长度标注" />
              <Item w={75} icon="alignDim" label="对齐标注" />
              <Item w={73} icon="measure" label="测量距离" />
            </SubBar>
          </SubRow>
          <SubRow>
            <SubBar $pl={14}>
              <Item w={54} icon="arrow" label="选择" caret caretGap={3} />
              <ToolSep $w={5} />
              <PressedTool $w={50}><Icon name="line" /><span>直线</span></PressedTool>
              <Item w={80} icon="arc" label="三点画弧" caret caretGap={3} />
              <Select w={55} value="" />
              <Tool $w={5} />
              <Item w={49} icon="rect" label="矩形" />
              <ToolSep $w={7} />
              <Item w={82} icon="smart" label="智能布置" caret caretGap={1} />
              <ToolSep $w={9} />
              <Item w={116} icon="tri" label="三点定义斜垫层" caret caretGap={1} />
              <Item w={110} icon="lookTop" label="查看垫层顶标高" />
              <ToolSep $w={8} />
              <Item w={95} icon="autoEarth" label="自动生成土方" />
            </SubBar>
            <SubBar $ml={62} $pl={2}>
              <Grip $l={0} $r={7} $h={24} />
              <Item w={120} icon="model" label="从模型提取工程量" off />
            </SubBar>
          </SubRow>

          <WorkArea>
            <VBar>
              <HGrip />
              <VItem $mt={4}><Icon name="brush" /></VItem>
              <VSep $mt={8} />
              <VItem $mt={5}><Icon name="rings" /></VItem>
              <VItem $mt={6}><Icon name="mirror" /></VItem>
              <VSep $mt={6} />
              <VItem $mt={4}><Icon name="move" /></VItem>
              <VItem $mt={7}><Icon name="rot" /></VItem>
              <VSep $mt={6} />
              <VItem $mt={6}><Icon name="extend" /><VLabel $mt={3}>延伸</VLabel></VItem>
              <VItem $mt={8}><Icon name="trim" /><VLabel>修剪</VLabel></VItem>
              <VSep $mt={6} />
              <VItem $mt={4}><Icon name="brk" /><VLabel $mt={6}>打断</VLabel><VCaret /></VItem>
              <VItem $mt={9}><Icon name="merge" /><VLabel $mt={4}>合并</VLabel></VItem>
              <VItem $mt={8}><Icon name="split" /><VLabel>分割</VLabel></VItem>
              <VSep $mt={5} />
              <VItem $mt={7}><Icon name="align" /><VLabel $mt={3}>对齐</VLabel><VCaret /></VItem>
              <VItem $mt={10}><Icon name="last" /></VItem>
            </VBar>
            <CanvasWrap>
              <CadDrawing />
              <Hint>按鼠标左键指定第一个端点，按右<br />键终止或ESC取消</Hint>
              <SearchBtn>
                <svg width="28" height="28" viewBox="0 0 28 28">
                  <circle cx="13.500" cy="13" r="9.500" fill="none" stroke="#fff" strokeWidth="2.200" />
                  <path d="M19 21l5 5" stroke="#fff" strokeWidth="2.400" />
                </svg>
              </SearchBtn>
            </CanvasWrap>
          </WorkArea>
        </RightArea>
      </Body>
    </Window>
  );
}
